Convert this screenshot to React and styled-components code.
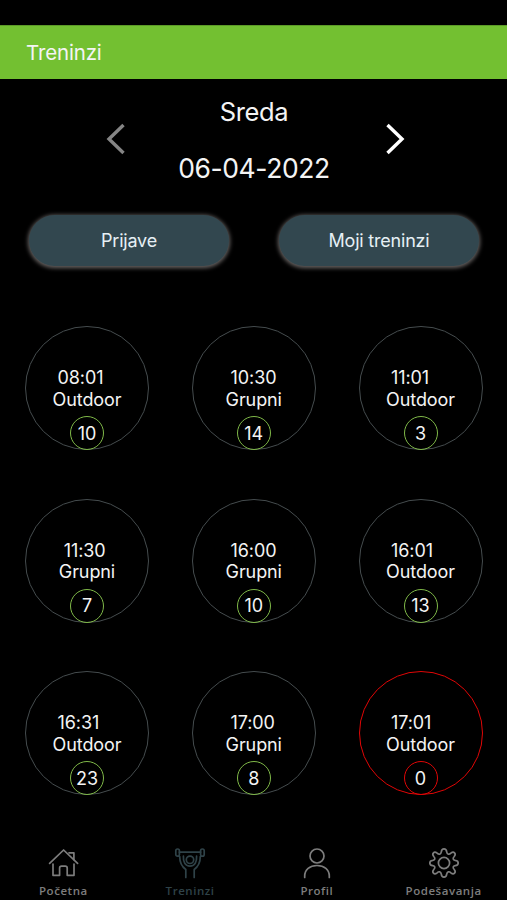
import React from 'react';
import styled, { createGlobalStyle } from 'styled-components';

const GlobalStyle = createGlobalStyle`
  * {
    box-sizing: border-box;
  }

  body {
    margin: 0;
    background: #000;
  }
`;

const Screen = styled.div`
  display: flex;
  flex-direction: column;
  height: 900px;
  padding-top: 25px;
  overflow: hidden;
  background: #000;
  color: #f4f4f4;
  font-family: Inter, 'Liberation Sans', sans-serif;
`;

const Header = styled.header`
  flex: none;
  display: flex;
  align-items: center;
  height: 54px;
  padding: 0 26px;
  background: #73c031;
  border-top: 1px solid #5c9a27;
`;

const Title = styled.h1`
  margin: 0;
  font-size: 20.5px;
  font-weight: 400;
  letter-spacing: -0.15px;
`;

const DatePicker = styled.div`
  flex: none;
  display: flex;
  justify-content: space-between;
  align-items: center;
  height: 120px;
  padding: 0 102px 0 106px;
`;

const DateText = styled.div`
  flex: none;
  display: flex;
  flex-direction: column;
  align-items: center;
  padding-top: 1px;
  margin-right: 3px;
  line-height: 56px;
  white-space: nowrap;
`;

const Day = styled.div`
  font-size: 25.5px;
  letter-spacing: -0.4px;
`;

const DateValue = styled.div`
  font-size: 26.5px;
  letter-spacing: -0.4px;
`;

const Arrow = styled.button`
  display: flex;
  padding: 0;
  border: 0;
  background: none;
  color: ${props => props.$color};
`;

const Actions = styled.div`
  flex: none;
  display: flex;
  justify-content: space-between;
  padding: 16px 28px 0 29px;
`;

const ActionButton = styled.button`
  width: 200px;
  height: 51px;
  padding: 0;
  border: 0;
  border-radius: 26px;
  background: #32474f;
  box-shadow: 0 1px 4px 1px #6a6665;
  color: #e6f0f5;
  font-family: inherit;
  font-size: 18px;
  letter-spacing: -0.2px;
`;

const Trainings = styled.main`
  flex: none;
  display: grid;
  grid-template-columns: repeat(3, 124px);
  grid-auto-rows: 124px;
  justify-content: space-between;
  row-gap: 48.7px;
  padding: 60px 24.5px 0 25px;
`;

const Circle = styled.div`
  display: flex;
  flex-direction: column;
  align-items: center;
  justify-content: flex-end;
  border: 1px solid ${props => (props.$full ? '#e00606' : '#454c4e')};
  border-radius: 50%;
`;

const Info = styled.div`
  font-size: 18px;
  line-height: 21.5px;
  margin-bottom: 6px;
  letter-spacing: -0.1px;
  white-space: pre;
`;

const Count = styled.div`
  display: flex;
  align-items: center;
  justify-content: center;
  width: 34px;
  height: 34px;
  margin-bottom: -1px;
  border: 1px solid ${props => (props.$full ? '#e00606' : '#7fb848')};
  border-radius: 50%;
  font-size: 18px;
`;

const TabBar = styled.nav`
  flex: none;
  display: grid;
  grid-template-columns: repeat(4, 1fr);
  margin-top: 51px;
`;

const Tab = styled.div`
  display: flex;
  flex-direction: column;
  align-items: center;
  color: ${props => (props.$active ? '#2f4248' : '#7d7d7d')};
`;

const TabLabel = styled.span`
  margin-top: 4px;
  font-family: 'Open Sans', 'Noto Sans', sans-serif;
  font-size: 11.5px;
  font-weight: 600;
  line-height: 14px;
  letter-spacing: 0.55px;
`;

const TabIcon = styled.svg.attrs({ width: 34, height: 34, viewBox: '0 0 34 34' })`
  fill: none;
  stroke: currentColor;
  stroke-width: 1.7;
  stroke-linecap: round;
  stroke-linejoin: round;
`;

const Chevron = ({ d }) =>
  <svg width="20" height="32" viewBox="0 0 20 32" fill="none" stroke="currentColor" strokeWidth="3.4">
    <path d={d} />
  </svg>;

const HomeIcon = () =>
  <TabIcon>
    <path d="M3.6 17.3 17.6 4 31.6 17.3" />
    <path d="M23 6.8h4.9v6.8" />
    <path d="M7 18v11.3h6.6v-7.2q0-2 2-2h3.6q2 0 2 2v7.2h6.8V18" />
  </TabIcon>;

const TrainingIcon = () =>
  <TabIcon>
    <rect x="2.8" y="3" width="3.6" height="7.2" rx="1.7" />
    <rect x="27.6" y="3" width="3.6" height="7.2" rx="1.7" />
    <path d="M6.4 6.2h21.2" />
    <circle cx="17" cy="13.800" r="3.700" />
    <path d="M6.700 10.500c0 6 1.200 9.500 6.100 13v8M27.300 10.500c0 6-1.200 9.500-6.100 13v8" />
    <path d="M10.400 10.200c-.3 5.200 1.500 10 6.600 10s6.900-4.800 6.600-10" />
  </TabIcon>;

const ProfileIcon = () =>
  <TabIcon>
    <circle cx="17" cy="10" r="7" />
    <path d="M4.700 31.500v-1.500c0-6.500 5-10.500 12.300-10.500s12.300 4 12.300 10.500v1.500" />
  </TabIcon>;

const SettingsIcon = () =>
  <TabIcon>
    <circle cx="17" cy="17" r="5.600" />
    <path d="M14.300 5.800 C14.800 1.800 19.200 1.800 19.700 5.800 C20.200 8.600 22.100 8.900 23.900 7.200 C26.800 4.800 29.600 7.600 27.200 10.500 C25.400 12.400 26 13.900 28.200 14.300 C32.200 14.800 32.200 19.200 28.200 19.700 C26 20.100 25.400 21.600 27.200 23.500 C29.600 26.400 26.800 29.200 23.900 26.800 C22.100 25.100 20.200 25.400 19.700 28.200 C19.200 32.200 14.800 32.200 14.300 28.200 C13.800 25.400 11.900 25.100 10.100 26.800 C7.200 29.200 4.400 26.400 6.800 23.500 C8.600 21.600 8 20.100 5.800 19.700 C1.800 19.200 1.800 14.800 5.800 14.300 C8 13.900 8.600 12.400 6.800 10.500 C4.400 7.600 7.200 4.800 10.100 7.200 C11.900 8.900 13.800 8.600 14.300 5.800 Z" />
  </TabIcon>;

const trainings = [
  { time: '08:01', name: 'Outdoor', count: 10 },
  { time: '10:30', name: 'Grupni', count: 14 },
  { time: '11:01', name: 'Outdoor', count: 3 },
  { time: '11:30', name: 'Grupni', count: 7 },
  { time: '16:00', name: 'Grupni', count: 10 },
  { time: '16:01', name: 'Outdoor', count: 13 },
  { time: '16:31', name: 'Outdoor', count: 23 },
  { time: '17:00', name: 'Grupni', count: 8 },
  { time: '17:01', name: 'Outdoor', count: 0 },
];

const tabs = [
  { label: 'Početna', Icon: HomeIcon },
  { label: 'Treninzi', Icon: TrainingIcon, active: true },
  { label: 'Profil', Icon: ProfileIcon },
  { label: 'Podešavanja', Icon: SettingsIcon },
];

const App = () =>
  <Screen>
    <GlobalStyle />
    <Header>
      <Title>Treninzi</Title>
    </Header>
    <DatePicker>
      <Arrow $color="#858585"><Chevron d="M17.500 2 3 16 17.500 30" /></Arrow>
      <DateText>
        <Day>Sreda</Day>
        <DateValue>06-04-2022</DateValue>
      </DateText>
      <Arrow $color="#fff"><Chevron d="M2.500 2 17 16 2.500 30" /></Arrow>
    </DatePicker>
    <Actions>
      <ActionButton>Prijave</ActionButton>
      <ActionButton>Moji treninzi</ActionButton>
    </Actions>
    <Trainings>
      {trainings.map(({ time, name, count }) =>
        <Circle key={time} $full={count === 0}>
          <Info>{` ${time}\n${name}`}</Info>
          <Count $full={count === 0}>{count}</Count>
        </Circle>
      )}
    </Trainings>
    <TabBar>
      {tabs.map(({ label, Icon, active }) =>
        <Tab key={label} $active={active}>
          <Icon />
          <TabLabel>{label}</TabLabel>
        </Tab>
      )}
    </TabBar>
  </Screen>;

export default App;
